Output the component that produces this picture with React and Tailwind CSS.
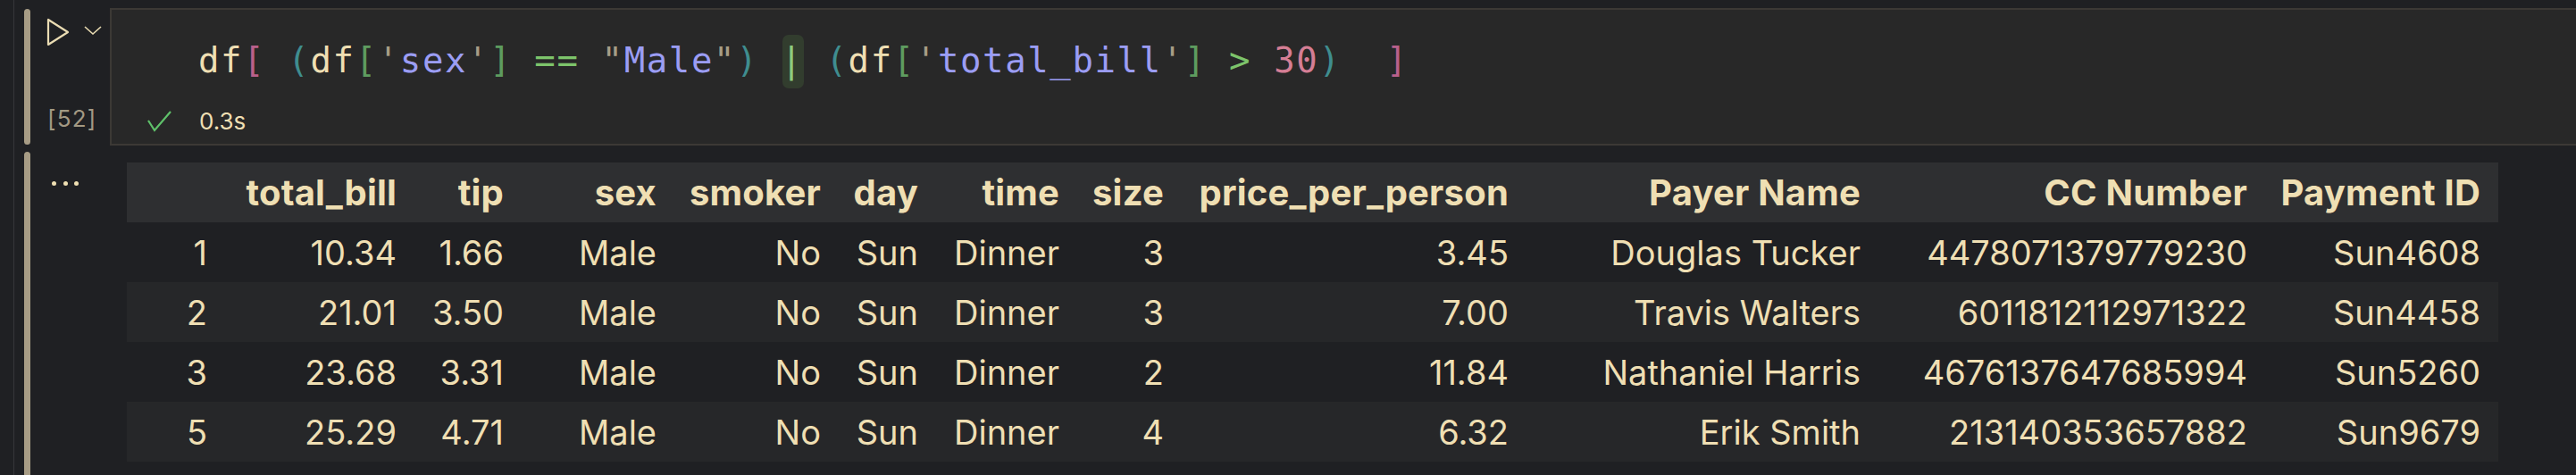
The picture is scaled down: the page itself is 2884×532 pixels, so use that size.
import React from "react";

function Code() {
  const t = (cls, s) => <span className={cls}>{s}</span>;
  const cream = "text-[#efdfb3]";
  const mag = "text-[#b9608b]";
  const teal = "text-[#3f8d8f]";
  const grn = "text-[#5e9c5f]";
  const tan = "text-[#a79d86]";
  const lav = "text-[#9b9df4]";
  const op = "text-[#7dc46b]";
  const num = "text-[#d57e95]";
  return (
    <div className="whitespace-pre font-['DejaVu_Sans_Mono',monospace] text-[39px] leading-[50px] tracking-[1.6px]">
      {t(cream, "df")}
      {t(mag, "[")}
      {" "}
      {t(teal, "(")}
      {t(cream, "df")}
      {t(grn, "[")}
      {t(tan, "'")}
      {t(lav, "sex")}
      {t(tan, "'")}
      {t(grn, "]")}
      {" "}
      {t(op, "==")}
      {" "}
      {t(tan, '"')}
      {t(lav, "Male")}
      {t(tan, '"')}
      {t(teal, ")")}
      {" "}
      <span className="relative inline-block">
        <span className="absolute left-[2px] right-[-1px] top-[-4px] h-[60px] rounded-[7px] bg-[#323d2e]"></span>
        <span className="relative text-[#8fcb7d]">|</span>
      </span>
      {" "}
      {t(teal, "(")}
      {t(cream, "df")}
      {t(grn, "[")}
      {t(tan, "'")}
      {t(lav, "total_bill")}
      {t(tan, "'")}
      {t(grn, "]")}
      {" "}
      {t(op, ">")}
      {" "}
      {t(num, "30")}
      {t(teal, ")")}
      {"  "}
      {t(mag, "]")}
    </div>
  );
}

const cols = [
  "",
  "total_bill",
  "tip",
  "sex",
  "smoker",
  "day",
  "time",
  "size",
  "price_per_person",
  "Payer Name",
  "CC Number",
  "Payment ID",
];

const rows = [
  ["1", "10.34", "1.66", "Male", "No", "Sun", "Dinner", "3", "3.45", "Douglas Tucker", "4478071379779230", "Sun4608"],
  ["2", "21.01", "3.50", "Male", "No", "Sun", "Dinner", "3", "7.00", "Travis Walters", "6011812112971322", "Sun4458"],
  ["3", "23.68", "3.31", "Male", "No", "Sun", "Dinner", "2", "11.84", "Nathaniel Harris", "4676137647685994", "Sun5260"],
  ["5", "25.29", "4.71", "Male", "No", "Sun", "Dinner", "4", "6.32", "Erik Smith", "213140353657882", "Sun9679"],
];

const grid =
  "grid grid-cols-[110px_212px_120px_171px_184px_109px_158px_117px_386px_394px_433px_261px] h-[67px] items-center";

function Table() {
  return (
    <div className="w-[2655px] font-['Inter','Liberation_Sans',sans-serif] text-[38px] leading-[46px] text-[#efdfb3]">
      <div className={`${grid} bg-[#2e2f31] font-bold text-[40px] tracking-[0.2px]`}>
        {cols.map((c, i) => (
          <div key={i} className="text-right pr-[20px] whitespace-nowrap">
            {c}
          </div>
        ))}
      </div>
      {rows.map((r, ri) => (
        <div key={ri} className={`${grid} ${ri % 2 === 1 ? "bg-[#262729]" : "bg-[#1f2023]"}`}>
          {r.map((v, i) => (
            <div key={i} className="text-right pr-[20px] whitespace-nowrap">
              {v}
            </div>
          ))}
        </div>
      ))}
    </div>
  );
}

export default function App() {
  return (
    <div className="w-[2884px] h-[532px] bg-[#1f2023] flex overflow-hidden">
      <div className="w-[15px] shrink-0"></div>
      <div className="w-[1px] shrink-0 bg-[#36363a]"></div>
      <div className="flex-1 flex flex-col min-w-0">
        {/* code cell */}
        <div className="flex h-[163px] pt-[9px] shrink-0">
          <div className="ml-[11px] w-[7px] my-[1px] rounded-full bg-[#a79c85] shrink-0"></div>
          <div className="w-[89px] shrink-0 flex flex-col">
            <div className="flex items-start mt-[10px] ml-[17px]">
              <svg width="28" height="34" viewBox="0 0 28 34" className="shrink-0">
                <polygon points="3,3 3,31 25,17" fill="none" stroke="#eadcb3" strokeWidth="2.2" strokeLinejoin="round" />
              </svg>
              <svg width="22" height="12" viewBox="0 0 22 12" className="ml-[14px] mt-[9px]">
                <polyline points="2,2 11,10 20,2" fill="none" stroke="#eadcb3" strokeWidth="1.6" />
              </svg>
            </div>
            <div className="mt-[64px] ml-[19px] font-['Inter','Liberation_Sans',sans-serif] text-[26px] leading-[32px] tracking-[1.2px] text-[#a39983]">
              [52]
            </div>
          </div>
          <div className="flex-1 border-2 border-r-0 border-[#3c3935] bg-[#282828] flex flex-col">
            <div className="pl-[97px] pt-[32px]">
              <Code />
            </div>
            <div className="flex items-center mt-[28px] pl-[39px] h-[30px]">
              <svg width="30" height="26" viewBox="0 0 30 26" className="shrink-0">
                <polyline points="2,12 9,23 27,2" fill="none" stroke="#5fc16a" strokeWidth="2.2" />
              </svg>
              <span className="ml-[29px] font-['Inter','Liberation_Sans',sans-serif] text-[26px] leading-[30px] text-[#efdfb3]">
                0.3s
              </span>
            </div>
          </div>
        </div>
        {/* output */}
        <div className="flex flex-1 pt-[7px]">
          <div className="ml-[11px] w-[7px] rounded-t-full bg-[#a79c85] shrink-0"></div>
          <div className="w-[89px] shrink-0 flex gap-[7.5px] pl-[24px] pt-[33px]">
            <div className="w-[5px] h-[5px] rounded-full bg-[#efdfb3]"></div>
            <div className="w-[5px] h-[5px] rounded-full bg-[#efdfb3]"></div>
            <div className="w-[5px] h-[5px] rounded-full bg-[#efdfb3]"></div>
          </div>
          <div className="pl-[19px] pt-[12px]">
            <Table />
          </div>
        </div>
      </div>
    </div>
  );
}
